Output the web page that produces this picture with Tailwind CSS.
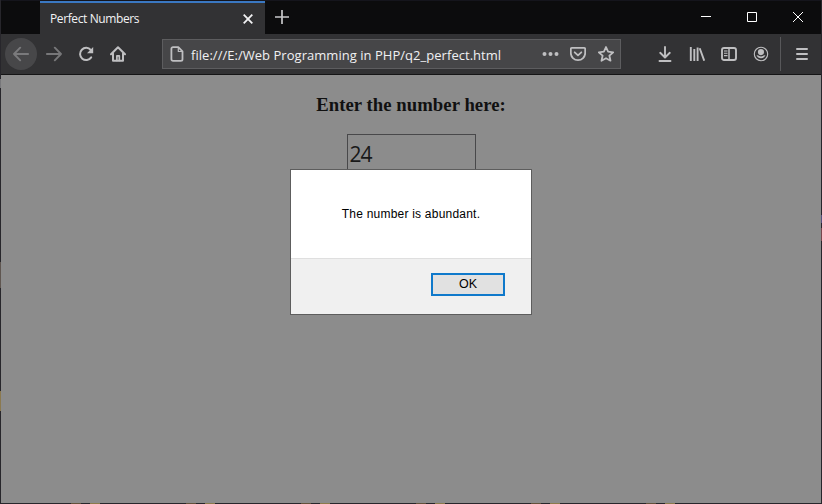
<!DOCTYPE html>
<html lang="en">
<head>
<meta charset="utf-8">
<title>Perfect Numbers</title>
<script src="https://cdn.jsdelivr.net/npm/@tailwindcss/browser@4"></script>
</head>
<body class="overflow-hidden">
<div class="relative flex h-[504px] w-[822px] flex-col border border-t-0 border-[#27262b] bg-[#8c8c8c] font-['Open_Sans','Noto_Sans',sans-serif]">
  <header class="flex h-[34px] shrink-0 border-t border-[#15151c] bg-[#0c0c0d]">
    <div class="ml-[39px] flex h-[33px] w-[225px] items-center border-t-2 border-[#3a78c2] bg-[#323234] px-[10px] text-[#f2f2f4]">
      <span class="grow text-[12px] leading-4 tracking-[-0.39px] whitespace-nowrap">Perfect Numbers</span>
      <svg class="mr-px size-3" viewBox="0 0 12 12" fill="none" stroke="currentColor" stroke-width="1.8"><path d="M1.700 1.700l8.600 8.600M10.300 1.700L1.700 10.300"/></svg>
    </div>
    <svg class="mt-[8px] ml-[9px] size-4 text-[#c8c8ca]" viewBox="0 0 16 16" fill="none" stroke="currentColor" stroke-width="1.7"><path d="M8 1v14M1 8h14"/></svg>
    <div class="mt-[9px] ml-auto flex gap-[32px] pr-[16px] text-white">
      <svg class="size-[14px]" viewBox="0 0 14 14" fill="none" stroke="currentColor"><path d="M2 6.5h10"/></svg>
      <svg class="size-[14px]" viewBox="0 0 14 14" fill="none" stroke="currentColor"><path d="M2.500 2.500h9v9h-9z"/></svg>
      <svg class="size-[14px]" viewBox="0 0 14 14" fill="none" stroke="currentColor"><path d="M2 2l10 10M12 2L2 12"/></svg>
    </div>
  </header>

  <nav class="flex h-[41px] shrink-0 items-center border-b border-[#151516] bg-[#323234] pl-[4px] text-[#bfbfc1]">
    <div class="flex size-[32px] items-center justify-center rounded-full bg-[#474749] text-[#7a7a7c]">
      <svg class="size-4" viewBox="0 0 16 16" fill="none" stroke="currentColor" stroke-width="1.9" stroke-linecap="round" stroke-linejoin="round"><path d="M15.200 8H1M7.200 1.700L1 8l6.200 6.300"/></svg>
    </div>
    <svg class="ml-[9px] size-4 text-[#777779]" viewBox="0 0 16 16" fill="none" stroke="currentColor" stroke-width="1.9" stroke-linecap="round" stroke-linejoin="round"><path d="M.8 8H15M8.800 1.700L15 8l-6.200 6.300"/></svg>
    <svg class="ml-[16px] size-4" viewBox="0 0 16 16"><path d="M13.200 11.400A6.100 6.100 0 1 1 12.800 4" fill="none" stroke="currentColor" stroke-width="2" stroke-linecap="round"/><path d="M15.200 1v6.200H9z" fill="currentColor"/></svg>
    <svg class="ml-[16px] size-4" viewBox="0 0 16 16" fill="none" stroke="currentColor" stroke-width="2" stroke-linecap="round" stroke-linejoin="round"><path d="M1 8.200L8 1.200l7 7M3 7.500v7.300h10V7.500"/><path d="M6.900 14.500v-4.700h2.400v4.700" stroke-width="1.7"/></svg>
    <div class="ml-[36px] flex h-[30px] w-[459px] items-center border border-[#5d5d5f] bg-[#464648] pl-[6px]">
      <svg class="size-4" viewBox="0 0 16 16" fill="none" stroke="currentColor" stroke-width="1.8" stroke-linejoin="round"><path d="M4 1.200h5.300l4.200 4.200v7.800a1.600 1.600 0 0 1-1.600 1.600H4a1.600 1.600 0 0 1-1.600-1.600V2.800A1.600 1.600 0 0 1 4 1.200z"/><path d="M9.300 1.500v4h4" stroke-width="1.2"/></svg>
      <span class="mt-[2px] ml-[6px] w-[351px] text-[13px] leading-5 tracking-[0.035px] whitespace-nowrap text-[#f0f0f2]">file:///E:/Web Programming in PHP/q2_perfect.html</span>
      <svg class="h-4 w-[17px]" viewBox="0 0 17 16" fill="currentColor"><circle cx="2.500" cy="8" r="2"/><circle cx="8.500" cy="8" r="2"/><circle cx="14.500" cy="8" r="2"/></svg>
      <svg class="ml-[11px] size-4" viewBox="0 0 16 16" fill="none" stroke="currentColor" stroke-width="1.8" stroke-linecap="round" stroke-linejoin="round"><path d="M2 1.800h12a1.200 1.200 0 0 1 1.200 1.200v4A7.200 7.200 0 0 1 .8 7v-4A1.200 1.200 0 0 1 2 1.800z"/><path d="M4.700 6.300L8 9.300l3.300-3"/></svg>
      <svg class="ml-[12px] size-4" viewBox="0 0 16 16" fill="none" stroke="currentColor" stroke-width="1.8" stroke-linejoin="round"><path d="M8 1l2.100 4.700 5.100.6-3.800 3.400 1.100 5L8 12.200l-4.500 2.500 1.100-5L.8 6.300l5.100-.6z"/></svg>
    </div>
    <svg class="ml-[36px] size-4" viewBox="0 0 16 16" fill="none" stroke="currentColor" stroke-width="1.9" stroke-linecap="round" stroke-linejoin="round"><path d="M8 1v10M3.200 6.800L8 11.500l4.800-4.700M2.500 15h11"/></svg>
    <svg class="ml-[16px] size-4" viewBox="0 0 16 16" fill="none" stroke="currentColor" stroke-width="1.9"><path d="M1.800 1v14M5.300 3v12M8.600 1.500v13.500M10.700 2.200l4.500 12.500"/></svg>
    <svg class="ml-[16px] size-4" viewBox="0 0 16 16" fill="none" stroke="currentColor" stroke-width="1.9"><rect x="1" y="2" width="14" height="12" rx="2"/><path d="M8 2v12" stroke-width="1.5"/><path d="M3 5h3.500M3 7.300h3.500M3 9.600h3.500" stroke-width="1.1"/></svg>
    <svg class="ml-[16px] size-4" viewBox="0 0 16 16" fill="currentColor"><circle cx="8" cy="8" r="6.700" fill="none" stroke="currentColor" stroke-width="1.1"/><circle cx="8" cy="6.100" r="3.100"/><path d="M3.500 9.300C4.800 9 5.500 9.600 6.200 10q1.800.8 3.600 0c.7-.4 1.400-1 2.700-.7A4.900 4.900 0 0 1 3.500 9.300z"/></svg>
    <div class="ml-[11px] h-[34px] w-px bg-[#58585a]"></div>
    <svg class="ml-[13px] size-4" viewBox="0 0 16 16" fill="none" stroke="currentColor" stroke-width="2" stroke-linecap="round"><path d="M3 3h10M3 8h10M3 13h10"/></svg>
  </nav>

  <main class="flex grow flex-col items-center">
    <h3 class="mt-[19px] font-['Liberation_Serif',serif] text-[18.72px] leading-[22px] font-bold tracking-[0.05px] whitespace-nowrap text-[#111]">Enter the number here:</h3>
    <input class="mt-[18px] h-[42px] w-[129px] border border-[#48484a] px-[2px] pb-[3px] text-[21px] tracking-[-1px] text-[#191919]" value="24">
  </main>

  <div role="dialog" class="absolute top-[169px] left-[289px] flex h-[146px] w-[242px] flex-col border border-[#5d5d5d] bg-[#f0f0f0] font-['Liberation_Sans',Arial,sans-serif] text-black">
    <div class="flex h-[89px] justify-center border-b border-[#dfdfdf] bg-white pt-[36px] text-[12px] leading-4 whitespace-nowrap"><span class="tracking-[0.22px]">The number is abundant.</span></div>
    <div class="flex justify-end pt-[14px] pr-[26px]">
      <button class="h-[23px] w-[74px] border-2 border-[#0f79cb] bg-[#e1e1e1] pb-px text-[12.500px] leading-[18px]">OK</button>
    </div>
  </div>

  <!-- desktop colours showing through the translucent window frame -->
  <div class="absolute bottom-[-1px] left-[70px] flex gap-[86px]">
    <div class="flex gap-[9px]"><i class="h-px w-[10px] bg-[#63513b]"></i><i class="h-px w-[10px] bg-[#8a7a4c]"></i></div>
    <div class="flex gap-[9px]"><i class="h-px w-[10px] bg-[#63513b]"></i><i class="h-px w-[10px] bg-[#8a7a4c]"></i></div>
    <div class="flex gap-[9px]"><i class="h-px w-[10px] bg-[#63513b]"></i><i class="h-px w-[10px] bg-[#8a7a4c]"></i></div>
    <div class="flex gap-[9px]"><i class="h-px w-[10px] bg-[#63513b]"></i><i class="h-px w-[10px] bg-[#8a7a4c]"></i></div>
    <div class="flex gap-[9px]"><i class="h-px w-[10px] bg-[#63513b]"></i><i class="h-px w-[10px] bg-[#8a7a4c]"></i></div>
    <div class="flex gap-[9px]"><i class="h-px w-[10px] bg-[#63513b]"></i><i class="h-px w-[10px] bg-[#8a7a4c]"></i></div>
  </div>
  <i class="absolute top-[391px] left-[-1px] h-[20px] w-px bg-[#8b794f]"></i>
  <i class="absolute top-[262px] left-[-1px] h-[26px] w-px bg-[#5f5650]"></i>
  <i class="absolute top-[79px] left-[-1px] h-[9px] w-px bg-[#77777a]"></i>
  <i class="absolute top-[215px] right-[-1px] h-[8px] w-px bg-[#55507c]"></i>
  <i class="absolute top-[228px] right-[-1px] h-[13px] w-px bg-[#76464c]"></i>
</div>
</body>
</html>
